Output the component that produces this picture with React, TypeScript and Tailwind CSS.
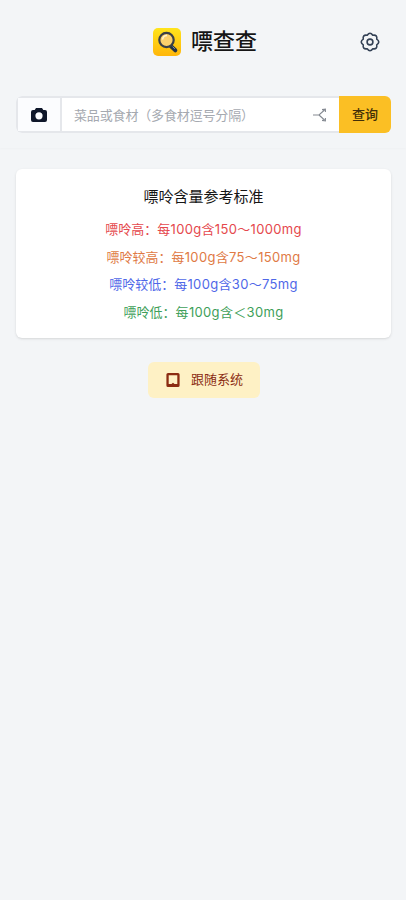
const levels = [
    { label: '嘌呤高', range: '每100g含150～1000mg', color: 'text-[#e5484d]' },
    { label: '嘌呤较高', range: '每100g含75～150mg', color: 'text-[#e07a45]' },
    { label: '嘌呤较低', range: '每100g含30～75mg', color: 'text-[#4f68e8]' },
    { label: '嘌呤低', range: '每100g含＜30mg', color: 'text-[#3f9f5a]' },
];

const Logo = () => (
    <svg viewBox="0 0 28 28" className="size-7">
        <defs>
            <linearGradient id="logo" x1="0" y1="0" x2="0" y2="1">
                <stop offset="0" stopColor="#ffe41c" />
                <stop offset="1" stopColor="#ffb60a" />
            </linearGradient>
        </defs>
        <rect width="28" height="28" rx="5" fill="url(#logo)" />
        <path d="M18 18.3l4.3 4" stroke="#263345" strokeWidth="4" strokeLinecap="round" />
        <path d="M19.6 18.6l2.2 2.2" stroke="#8794a5" strokeWidth="1" />
        <circle cx="13.5" cy="12" r="7.2" fill="#fbd06c" stroke="#3b4047" strokeWidth="2.2" />
        <path d="M9.6 11.5a4.5 4.5 0 0 1 4.4-4" fill="none" stroke="#fff3cf" strokeWidth="1.5" />
    </svg>
);

const GearIcon = () => (
    <svg viewBox="0 0 20 20" className="size-5 shrink-0" fill="none" stroke="currentColor" strokeWidth="1.6" strokeLinejoin="round">
        <path d="M12.8 3.26Q17.6 2.4 16.74 7.2Q20.8 10 16.74 12.8Q17.6 17.6 12.8 16.74Q10 20.8 7.2 16.74Q2.4 17.6 3.26 12.8Q-.8 10 3.26 7.2Q2.4 2.4 7.2 3.26Q10 -.8 12.8 3.26z" />
        <circle cx="10" cy="10" r="2.9" />
    </svg>
);

const CameraIcon = () => (
    <svg viewBox="0 0 16 14" className="h-3.5 w-4">
        <path
            fill="currentColor"
            fillRule="evenodd"
            d="M5 0h6l1.3 2H14a2 2 0 0 1 2 2v8a2 2 0 0 1-2 2H2a2 2 0 0 1-2-2V4a2 2 0 0 1 2-2h1.7zM8 4.2a3.6 3.6 0 1 0 0 7.2a3.6 3.6 0 1 0 0-7.2z"
        />
    </svg>
);

const BranchIcon = () => (
    <svg viewBox="0 0 14 14" className="size-3.5" fill="none" stroke="#858a92" strokeWidth="1.1">
        <path d="M0 7h6l5.5-5M6 7l5.5 5M9 1.6l3.4-.5v3M9 12.4l3.4.5v-3" />
    </svg>
);

const TabletIcon = () => (
    <svg viewBox="0 0 14 14" className="size-3.5">
        <path
            fill="#8b2c12"
            fillRule="evenodd"
            d="M2 0h10a1.6 1.6 0 0 1 1.6 1.6v10.8A1.6 1.6 0 0 1 12 14H2a1.6 1.6 0 0 1-1.6-1.6V1.6A1.6 1.6 0 0 1 2 0zm.7 2.2v8.8h2.8L7 9.8 8.5 11h2.8V2.2z"
        />
    </svg>
);

const App = () => {
    return (
        <div className="min-h-screen bg-[#f3f5f7] font-['Inter','Noto_Sans_CJK_SC',sans-serif] text-[#161616]">
            <header className="h-[148px] bg-[#f3f5f7] px-4 shadow-[0_0_3px_rgb(0_0_0/0.04)]">
                <div className="grid h-[84px] grid-cols-[32px_1fr_32px] items-center">
                    <span />
                    <div className="flex items-center justify-center gap-2.5 pl-1">
                        <Logo />
                        <h1 className="pb-0.5 text-[22px] leading-7 font-medium">嘌查查</h1>
                    </div>
                    <button className="flex pl-0.5 text-[#334155]">
                        <GearIcon />
                    </button>
                </div>
                <div className="mt-3 -mr-px flex h-[37px] overflow-hidden rounded-md">
                    <div className="flex min-w-0 flex-1 rounded-l-md border-2 border-r-0 border-[#e5e7eb] bg-white">
                        <button className="flex w-11 items-center justify-center border-r-2 border-[#e5e7eb] bg-[#fbfcfe] text-[#0f172a]">
                            <CameraIcon />
                        </button>
                        <span className="flex-1 self-center pl-3 text-[13px] leading-5 tracking-[-0.15px] whitespace-nowrap text-[#a5a9b0]">
                            菜品或食材（多食材逗号分隔）
                        </span>
                        <button className="pr-3">
                            <BranchIcon />
                        </button>
                    </div>
                    <button className="w-[52px] bg-[#fbbf24] text-[13px] font-medium text-[#422f08]">查询</button>
                </div>
            </header>

            <main className="flex flex-col items-center pt-[21px] pr-[15px] pl-4">
                <section className="h-[169px] w-full rounded-md bg-white pt-3.5 text-center shadow-sm">
                    <h2 className="mb-1.5 text-[15px] leading-[27px]">嘌呤含量参考标准</h2>
                    {levels.map((level) => (
                        <p key={level.label} className={`text-[13px] leading-[27.6px] ${level.color}`}>
                            {level.label}：<span className="tracking-[0.33px]">{level.range}</span>
                        </p>
                    ))}
                </section>
                <button className="mt-6 flex h-9 w-28 items-center justify-center gap-[11px] rounded-md bg-[#fef1c5] pl-0.5 text-[13px] text-[#8b2c12]">
                    <TabletIcon />
                    跟随系统
                </button>
            </main>
        </div>
    );
};

export default App;
